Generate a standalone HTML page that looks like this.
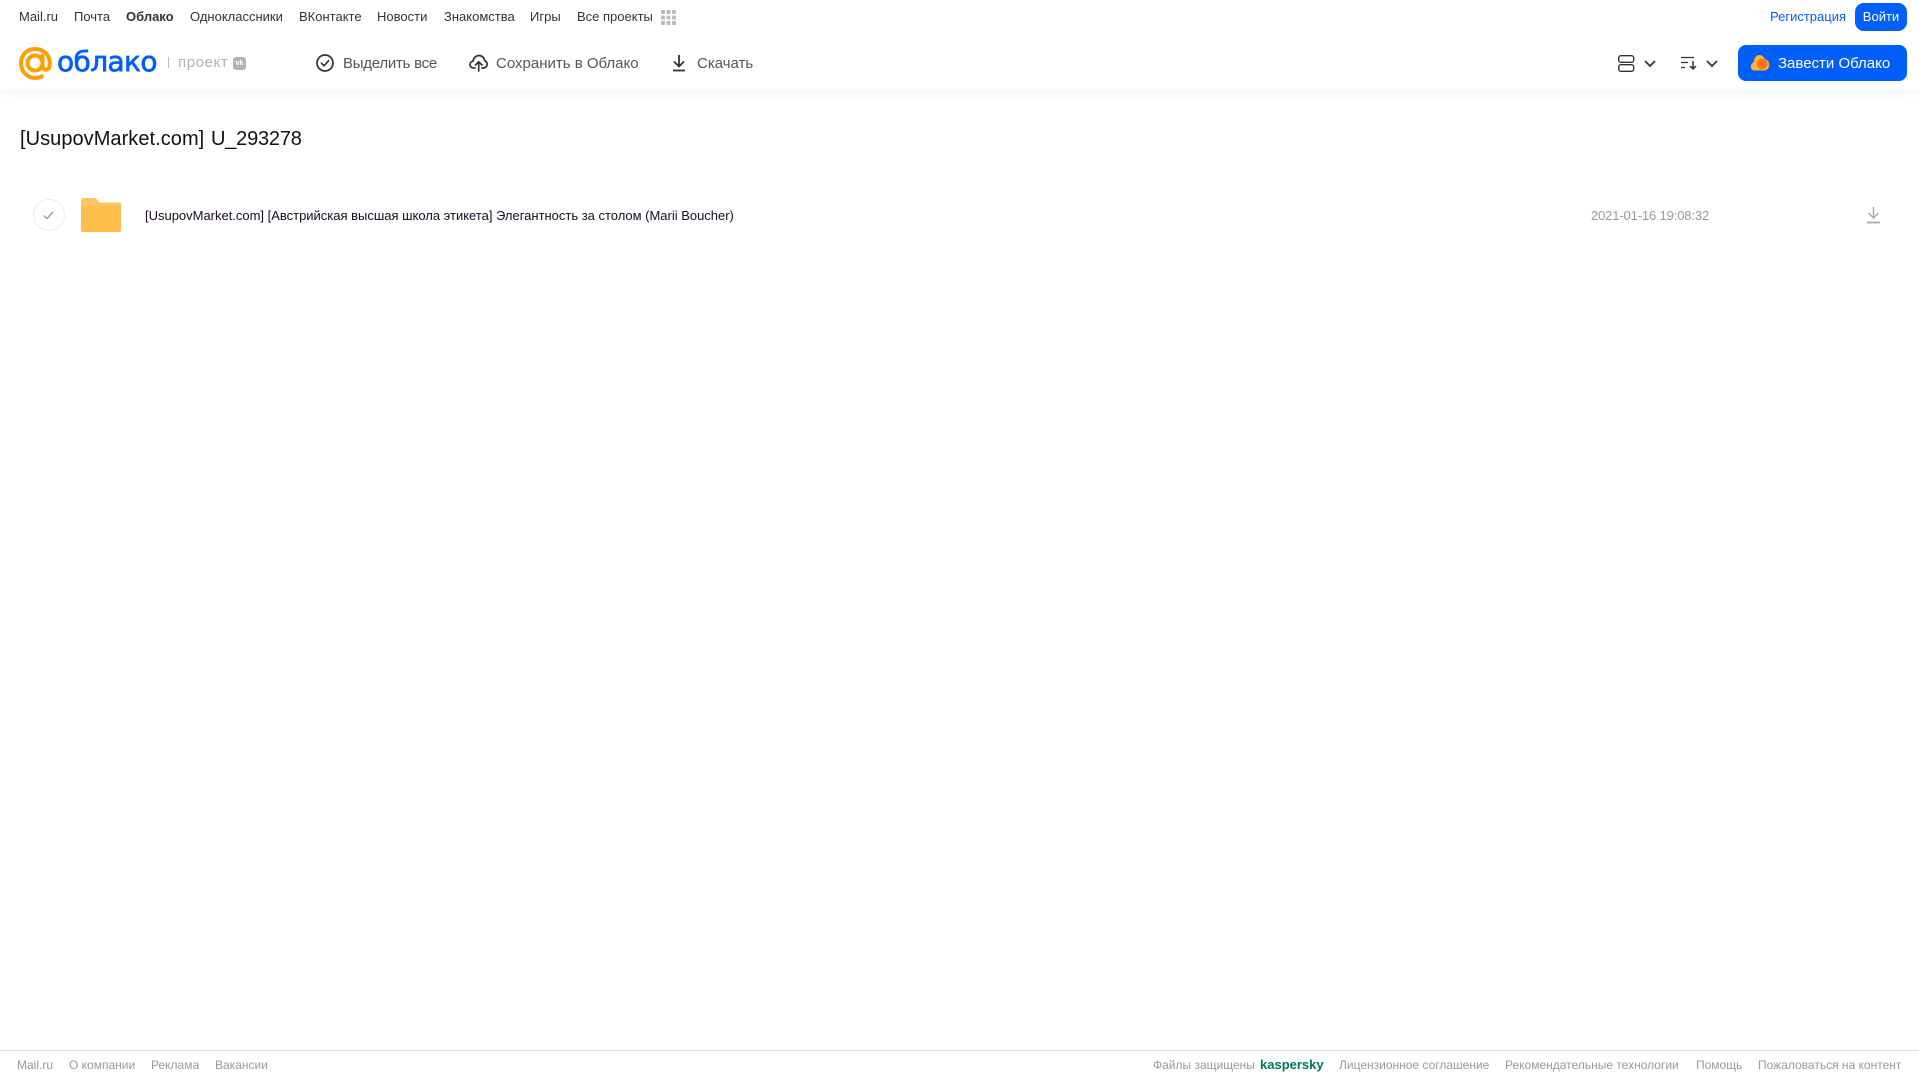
<!DOCTYPE html>
<html lang="ru"><head><meta charset="utf-8"><title>Облако</title>
<style>
html,body{margin:0;padding:0;background:#fff;width:1919px;height:1079px;overflow:hidden}
body{position:relative;font-family:"Liberation Sans","DejaVu Sans",sans-serif}
.t{position:absolute;white-space:nowrap;line-height:20px}
.n{font-size:13px;top:7px;color:#333}
.b{font-size:15px;top:54px;color:#555}
.f{font-size:12px;top:1055px;color:#999}
svg{position:absolute;overflow:visible}
</style></head><body>
<div style="position:absolute;left:0;top:0;width:1919px;height:90px;background:#fff;box-shadow:0 2px 10px rgba(0,0,0,.06)"></div>

<span class="t n" style="left:19px">Mail.ru</span>
<span class="t n" style="left:74px">Почта</span>
<span class="t n" style="left:126px;font-weight:bold">Облако</span>
<span class="t n" style="left:190px">Одноклассники</span>
<span class="t n" style="left:299px">ВКонтакте</span>
<span class="t n" style="left:377px">Новости</span>
<span class="t n" style="left:444px">Знакомства</span>
<span class="t n" style="left:530px">Игры</span>
<span class="t n" style="left:577px">Все проекты</span>
<svg style="left:661px;top:10px" width="15" height="15" fill="#bbb"><rect x="0" y="0" width="4" height="4" rx="1"/><rect x="5.500" y="0" width="4" height="4" rx="1"/><rect x="11" y="0" width="4" height="4" rx="1"/><rect x="0" y="5.500" width="4" height="4" rx="1"/><rect x="5.500" y="5.500" width="4" height="4" rx="1"/><rect x="11" y="5.500" width="4" height="4" rx="1"/><rect x="0" y="11" width="4" height="4" rx="1"/><rect x="5.500" y="11" width="4" height="4" rx="1"/><rect x="11" y="11" width="4" height="4" rx="1"/></svg>

<span class="t" style="left:1770px;top:7px;font-size:13px;color:#005ff9">Регистрация</span>
<div style="position:absolute;left:1855px;top:3px;width:52px;height:28px;border-radius:9px;background:#005ff9;color:#fff;font-size:13px;line-height:28px;text-align:center">Войти</div>

<svg style="left:19px;top:47px" width="33" height="33" viewBox="0 0 33 33" fill="none" stroke="#ff9e00" stroke-width="4"><circle cx="16" cy="16" r="7.500"/><path d="M23.500 9v9c0 3 1.700 4.700 3.700 4.700 2.400 0 3.600-3 3.600-6.700C30.800 7.800 24.200 2 16 2S2 8 2 16.200 8.300 31 16 31c2.600 0 4.800-.5 6.800-1.600" stroke-linecap="round"/></svg>
<span class="t" style="left:57px;top:44px;font-size:28px;line-height:36px;color:#005ff9;font-family:'DejaVu Sans',sans-serif;letter-spacing:-.6px;-webkit-text-stroke:.7px #005ff9">облако</span>
<div style="position:absolute;left:168px;top:57px;width:1px;height:11px;background:#bbb"></div>
<span class="t" style="left:178px;top:53px;font-size:15px;color:#b3b3b3;letter-spacing:.6px">проект</span>
<div style="position:absolute;left:233px;top:57px;width:13px;height:13px;border-radius:3px;background:#b3b3b3;color:#fff;font-size:7px;font-weight:bold;line-height:13px;text-align:center">vk</div>

<svg style="left:316px;top:54px" width="18" height="18" fill="none" stroke="#333" stroke-width="1.700"><circle cx="9" cy="9" r="8"/><path d="M5.500 9.300l2.500 2.500 4.500-5" stroke-linecap="round"/></svg>
<span class="t b" style="left:343px;letter-spacing:-.25px">Выделить все</span>
<svg style="left:469px;top:54px" width="19" height="18" viewBox="0 0 19 18" fill="none" stroke="#333" stroke-width="1.700" stroke-linecap="round" stroke-linejoin="round"><path d="M6 14H4.500C2.500 14 1 12.500 1 10.600c0-1.800 1.300-3.100 3-3.300C4.500 4 7 1.500 10 1.500c3.200 0 5.500 2.500 5.700 5.300 1.500.4 2.500 1.800 2.500 3.400 0 2-1.500 3.800-3.700 3.800H13"/><path d="M9.700 17V8M6.500 11l3.200-3.200L13 11"/></svg>
<span class="t b" style="left:496px">Сохранить в Облако</span>
<svg style="left:672px;top:54px" width="14" height="18" fill="none" stroke="#333" stroke-width="1.800"><path d="M7 1v11M2 7.500L7 12.500l5-5"/><path d="M1 16.500h12"/></svg>
<span class="t b" style="left:697px">Скачать</span>

<svg style="left:1618px;top:55px" width="17" height="17" fill="none" stroke="#333" stroke-width="1.400"><rect x=".7" y=".7" width="15" height="6.600" rx="2.200"/><rect x=".7" y="9.700" width="15" height="6.600" rx="2.200"/></svg>
<svg style="left:1644px;top:60px" width="12" height="7" fill="none" stroke="#333" stroke-width="1.700"><path d="M1 1l5 5 5-5"/></svg>
<svg style="left:1681px;top:56px" width="16" height="14" fill="none" stroke="#333" stroke-width="1.300"><path d="M0 1.500h13M0 6.500h7M0 11.500h4"/><path d="M12 5v8M9 10l3 3 3-3" stroke-width="1.500"/></svg>
<svg style="left:1706px;top:60px" width="12" height="7" fill="none" stroke="#333" stroke-width="1.700"><path d="M1 1l5 5 5-5"/></svg>

<div style="position:absolute;left:1738px;top:45px;width:169px;height:36px;border-radius:8px;background:#005ff9"></div>
<svg style="left:1750px;top:54px" width="20" height="18" viewBox="0 0 20 18"><path d="M5 16.500C2 16.500.8 14.500.8 12.500c0-2 1-3.500 2.700-4C4 4 6.500 1 9.500 1c2.500 0 4.500 1.500 5 4 3 .5 4.700 3 4.700 6 0 3-2 5.500-5 5.500z" fill="#ffb13d"/><circle cx="12" cy="10" r="5.300" fill="#ff6a13" opacity=".85"/></svg>
<span class="t" style="left:1778px;top:54px;font-size:15px;color:#fff">Завести Облако</span>

<span class="t" style="left:20px;top:126px;font-size:20px;line-height:26px;color:#111;letter-spacing:.05px">[UsupovMarket.com]</span>
<span class="t" style="left:211px;top:126px;font-size:20px;line-height:26px;color:#111;letter-spacing:-.2px">U_293278</span>

<div style="position:absolute;left:33px;top:199px;width:30px;height:30px;border:1px solid #ececec;border-radius:50%"></div>
<svg style="left:43px;top:211px" width="11" height="9" fill="none" stroke="#999" stroke-width="1.400"><path d="M1 4.500l3 3L10 1"/></svg>
<svg style="left:81px;top:198px" width="40" height="34" viewBox="0 0 40 34"><path d="M2 0h11c1.500 0 2.500.7 3.500 2l2 2.500H38c1.100 0 2 .9 2 2V8H0V2C0 .9.900 0 2 0z" fill="#ffc55e"/><path d="M0 5h40v27c0 1.100-.9 2-2 2H2c-1.100 0-2-.9-2-2z" fill="#ffc55e"/><path d="M0 8h40v24c0 1.100-.9 2-2 2H2c-1.100 0-2-.9-2-2z" fill="#ffbd4a"/></svg>
<span class="t" style="left:145px;top:206px;font-size:13px;color:#1a0a24;letter-spacing:-.01px">[UsupovMarket.com] [Австрийская высшая школа этикета] Элегантность за столом (Marii Boucher)</span>
<span class="t" style="left:1591px;top:206px;font-size:13px;color:#999;letter-spacing:-.14px">2021-01-16 19:08:32</span>
<svg style="left:1867px;top:207px" width="13" height="17" fill="none" stroke="#a8a8a8" stroke-width="1.400"><path d="M6.500 0v11M1.500 6l5 5 5-5"/><path d="M0 15.500h13" stroke-width="1.800"/></svg>

<div style="position:absolute;left:0;top:1050px;width:1919px;height:1px;background:#ddd"></div>
<span class="t f" style="left:17px">Mail.ru</span>
<span class="t f" style="left:69px">О компании</span>
<span class="t f" style="left:151px">Реклама</span>
<span class="t f" style="left:215px">Вакансии</span>
<span class="t f" style="left:1153px">Файлы защищены</span>
<span class="t f" style="left:1260px;color:#00775f;font-weight:bold;font-size:13px">kaspersky</span>
<span class="t f" style="left:1339px">Лицензионное соглашение</span>
<span class="t f" style="left:1505px">Рекомендательные технологии</span>
<span class="t f" style="left:1696px">Помощь</span>
<span class="t f" style="left:1758px">Пожаловаться на контент</span>
</body></html>
